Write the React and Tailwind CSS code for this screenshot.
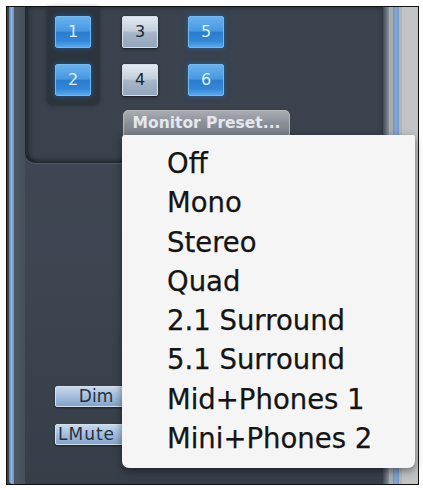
export default function App() {
  const items = [
    "Off",
    "Mono",
    "Stereo",
    "Quad",
    "2.1 Surround",
    "5.1 Surround",
    "Mid+Phones 1",
    "Mini+Phones 2",
  ];
  const blue =
    "bg-[linear-gradient(to_bottom,#6ab2ee_0%,#4898e2_46%,#2a7ccf_52%,#3387d6_80%,#5aa8ea_100%)] text-[#dcefff] border border-[#74b8ee] shadow-[0_0_5px_1px_rgba(30,110,200,0.45)]";
  const silver =
    "bg-[linear-gradient(to_bottom,#e2eaf2_0%,#c3cfdc_46%,#a7b6c8_52%,#95a7bc_100%)] text-[#1c2632] border border-[#d5dfe9] shadow-[0_1px_3px_rgba(0,0,0,0.6)]";
  const btn =
    "w-[36px] h-[32px] flex items-center justify-center text-[16px] leading-none rounded-[2px]";
  const small =
    "w-[82px] h-[21px] rounded-[2px] bg-[linear-gradient(to_bottom,#c6d8ec,#a3bedc_50%,#84a4ca)] border border-[#d3e0ee] shadow-[0_1px_2px_rgba(0,0,0,0.5)] flex items-center text-[17px] leading-none text-[#26313f]";
  return (
    <div
      className="relative w-[423px] h-[490px] bg-white pt-[6px] pl-[6px]"
      style={{ fontFamily: '"DejaVu Sans", Verdana, sans-serif' }}
    >
      <div className="w-[413px] h-[479px] border border-[#111] bg-[#3d4652] flex">
        {/* left strip */}
        <div className="w-[18px] h-full flex">
          <div className="w-[2px] h-full bg-[#38414b]" />
          <div className="w-[5px] h-full bg-[linear-gradient(to_right,#5f86b8,#8fb2de,#6a91c4)] rounded-bl-[4px]" />
          <div className="w-[11px] h-full bg-[linear-gradient(to_right,#4e5964,#46505b)]" />
        </div>
        {/* center */}
        <div className="flex-1 h-full flex flex-col bg-[linear-gradient(to_bottom,#3f4955,#3c4550_60%,#363e48)]">
          <div className="h-[156px] shrink-0 rounded-b-[10px] bg-[#39424d] shadow-[inset_4px_0_5px_rgba(0,0,0,0.35),inset_0_-3px_4px_rgba(0,0,0,0.3),0_1px_0_rgba(255,255,255,0.12)] pl-[22px] relative">
            <div className="flex">
              <div className="w-[52px] h-[98px] rounded-b-[6px] bg-[#2c343d] shadow-[0_0_4px_rgba(0,0,0,0.4)] pl-[8px] pt-[9px] flex flex-col gap-[16px]">
                <div className={`${btn} ${blue}`}>1</div>
                <div className={`${btn} ${blue}`}>2</div>
              </div>
              <div className="ml-[23px] pt-[9px] flex flex-col gap-[16px]">
                <div className={`${btn} ${silver}`}>3</div>
                <div className={`${btn} ${silver}`}>4</div>
              </div>
              <div className="ml-[30px] pt-[9px] flex flex-col gap-[16px]">
                <div className={`${btn} ${blue}`}>5</div>
                <div className={`${btn} ${blue}`}>6</div>
              </div>
            </div>
            <div className="ml-[76px] mt-[5px] w-[167px] h-[26px] rounded-t-[5px] bg-[linear-gradient(to_bottom,#a9adb2,#8a9098_50%,#7a8089)] border border-[#b4b8bd] flex justify-center pt-[5px]">
              <span className="text-[15.5px] font-bold leading-none text-[#e4e8ee] whitespace-nowrap">
                Monitor Preset...
              </span>
            </div>
          </div>
          <div className="flex-1 flex flex-col justify-end pl-[30px] pb-[39px] gap-[17px]">
            <div className={`${small} justify-center`}>Dim</div>
            <div className={`${small} pl-[2px] tracking-[1px] overflow-hidden`}>LMute</div>
          </div>
        </div>
        {/* right strip */}
        <div className="w-[35px] h-full flex">
          <div className="w-[6px] h-full bg-[linear-gradient(to_right,#3f4955,#8a9199)]" />
          <div className="w-[4px] h-full bg-[#a7acb1]" />
          <div className="w-[6px] h-full bg-[linear-gradient(to_right,#6f93c2,#86a8d2,#7196c6)]" />
          <div className="w-[3px] h-full bg-[#b3b6b9]" />
          <div className="flex-1 h-full bg-[#c1c3c5]" />
        </div>
      </div>
      {/* dropdown menu */}
      <div className="absolute left-[122px] top-[135px] w-[293px] h-[333px] bg-[#f5f5f5] rounded-tl-[3px] rounded-tr-[2px] rounded-b-[7px] shadow-[0_3px_8px_rgba(0,0,0,0.45)] pt-[9px] pl-[45px]">
        {items.map((t) => (
          <div
            key={t}
            className="text-[27.5px] leading-[39.3px] text-[#141414] whitespace-nowrap [-webkit-text-stroke:0.25px_#141414]"
          >
            {t}
          </div>
        ))}
      </div>
    </div>
  );
}
